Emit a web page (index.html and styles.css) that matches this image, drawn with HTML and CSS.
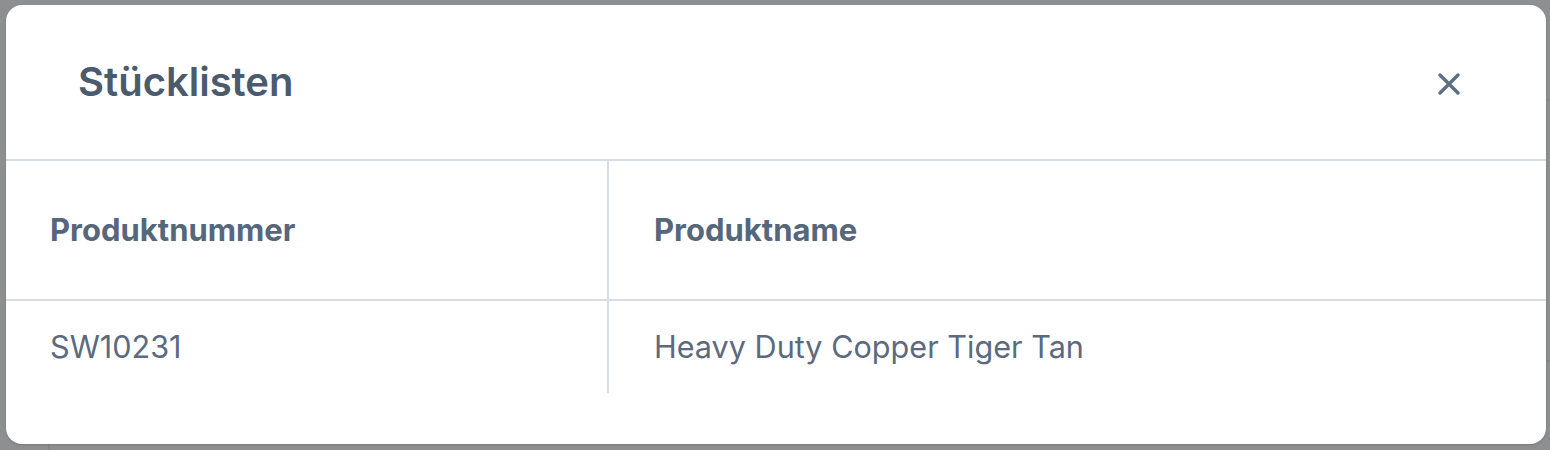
FILE: index.html
```html
<!DOCTYPE html>
<html lang="de">
<head>
<meta charset="utf-8">
<title>Stücklisten</title>
<link rel="stylesheet" href="styles.css">
</head>
<body>
<div class="backdrop">
  <div class="modal">
    <header class="modal-header">
      <h2 class="modal-title">Stücklisten</h2>
      <button class="close" type="button" aria-label="Schließen">
        <svg width="24" height="24" viewBox="0 0 24 24" fill="none" stroke="currentColor" stroke-width="3.5" stroke-linecap="round">
          <path d="M3 3 L21 21 M21 3 L3 21"/>
        </svg>
      </button>
    </header>
    <table class="bom">
      <thead>
        <tr>
          <th class="col-num">Produktnummer</th>
          <th>Produktname</th>
        </tr>
      </thead>
      <tbody>
        <tr>
          <td class="col-num">SW10231</td>
          <td>Heavy Duty Copper Tiger Tan</td>
        </tr>
      </tbody>
    </table>
  </div>
</div>
</body>
</html>
```

FILE: styles.css
```css
* { box-sizing: border-box; }
html, body {
  margin: 0;
  padding: 0;
}
body {
  width: 1550px;
  height: 450px;
  overflow: hidden;
  font-family: Inter, "Noto Sans", sans-serif;
  background-color: #8e8f91;
  background-image:
    linear-gradient(#858789, #858789),
    linear-gradient(#858789, #858789),
    linear-gradient(#858789, #858789);
  background-size: 4px 2px, 4px 2px, 2px 6px;
  background-position: 1546px 99px, 1546px 360px, 48px 444px;
  background-repeat: no-repeat;
}
.backdrop {
  padding: 5px 4px 6px 6px;
}
.modal {
  width: 1540px;
  height: 439px;
  background: #ffffff;
  border-radius: 16px;
  box-shadow: 0 1px 3px rgba(0, 0, 0, 0.15);
  overflow: hidden;
  display: flex;
  flex-direction: column;
}
.modal-header {
  height: 156px;
  flex: none;
  display: flex;
  align-items: center;
  justify-content: space-between;
  padding: 0 85px 0 72px;
  border-bottom: 2px solid #d6dde6;
}
.modal-title {
  margin: 0;
  font-size: 40px;
  font-weight: 600;
  color: #4b5a6d;
  line-height: 48px;
}
.close {
  border: 0;
  background: none;
  padding: 0;
  width: 24px;
  height: 24px;
  color: #5f6f84;
  display: flex;
  margin-top: 4px;
}
.bom {
  border-collapse: collapse;
  width: 100%;
  table-layout: fixed;
}
.bom th,
.bom td {
  text-align: left;
  font-size: 31px;
  line-height: 40px;
  color: #56667b;
  padding: 0 0 0 44px;
}
.bom th {
  height: 139px;
  font-weight: 700;
  border-bottom: 2px solid #d6dde6;
}
.bom td {
  height: 93px;
  font-size: 30.6px;
  font-weight: 400;
  color: #5b6a7e;
}
.bom .col-num {
  width: 602px;
  border-right: 2px solid #d6dde6;
}
.bom th + th,
.bom td + td {
  padding-left: 45px;
}
```
